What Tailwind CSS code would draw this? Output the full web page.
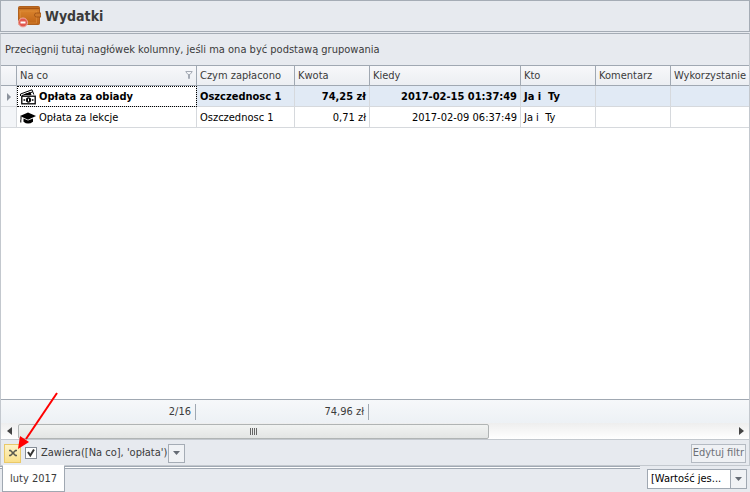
<!DOCTYPE html>
<html lang="pl">
<head>
    <meta charset="UTF-8">
    <meta name="viewport" content="width=device-width, initial-scale=1.0">
    <title>Wydatki</title>
    <script src="https://cdn.jsdelivr.net/npm/@tailwindcss/browser@4"></script>
</head>
<body class="h-screen flex flex-col overflow-hidden bg-[#e7eaef] text-[#3b3b3b] text-[11px] leading-4 font-['DejaVu_Sans_Condensed','DejaVu_Sans',sans-serif]">
    <!-- title -->
    <header class="h-8 shrink-0 flex items-center gap-1 pl-4 border border-[#a5acb5]">
        <svg class="w-6 h-6" viewBox="0 0 24 24">
            <defs>
                <linearGradient id="leather" x1="0" y1="0" x2="0" y2="1">
                    <stop offset="0" stop-color="#b5631c"/>
                    <stop offset=".25" stop-color="#d8812b"/>
                    <stop offset="1" stop-color="#bd6216"/>
                </linearGradient>
            </defs>
            <rect x="1.500" y="2.500" width="21" height="18" rx="1" fill="url(#leather)" stroke="#b0601f"/>
            <path d="M2 4.500h20" stroke="#a65212"/>
            <path d="M3.500 7h16v12h-16z" fill="none" stroke="#e09543" stroke-width=".5"/>
            <path d="M19.500 9h4.500v4h-4.500a2 2 0 0 1 0-4z" fill="#cf7a2a" stroke="#9a4f14" stroke-width=".8"/>
            <circle cx="6" cy="18.500" r="4.500" fill="#e2584f" stroke="#f0b0a8"/>
            <path d="M3.500 18.500h5" stroke="#fff" stroke-width="2"/>
        </svg>
        <h1 class="text-[14px] font-bold">Wydatki</h1>
    </header>

    <!-- grid -->
    <main class="flex-1 min-h-0 mt-px flex flex-col border border-[#c3c8ce] border-t-[#a5acb5]">
        <p class="h-8 shrink-0 flex items-center pl-1 pt-px border-b border-[#a0a8b2]">Przeciągnij tutaj nagłówek kolumny, jeśli ma ona być podstawą grupowania</p>

        <div class="flex-1 min-h-0 overflow-hidden bg-white">
            <table class="w-[790px] table-fixed border-separate border-spacing-0 text-black whitespace-nowrap">
                <colgroup>
                    <col class="w-4"><col class="w-[180px]"><col class="w-[98px]"><col class="w-[75px]"><col class="w-[151px]"><col class="w-[75px]"><col class="w-[75px]"><col class="w-[120px]">
                </colgroup>
                <thead>
                    <tr class="h-5 text-left text-[#3b3b3b] bg-linear-to-b from-[#f7f8fa] to-[#ebeef2] *:font-normal *:border-r *:border-b *:border-[#a0a8b2] *:px-[3px] *:py-0">
                        <th></th>
                        <th>
                            <div class="flex items-center justify-between">Na co
                                <svg class="w-2 h-4" viewBox="0 0 8 16" fill="none" stroke="#a5abb5"><path d="M.5 3.500h7M1 4l2 2.500h2L7 4M3.500 6v4.500h1V6"/></svg>
                            </div>
                        </th>
                        <th>Czym zapłacono</th>
                        <th>Kwota</th>
                        <th>Kiedy</th>
                        <th>Kto</th>
                        <th>Komentarz</th>
                        <th>Wykorzystanie b</th>
                    </tr>
                </thead>
                <tbody>
                    <tr class="h-[21px] font-bold bg-[#e1eaf5] *:border-r *:border-b *:border-[#d6d9dd] *:px-[3px] *:pt-0.5 *:pb-0">
                        <td class="bg-[#f3f5f8]"><svg class="w-2 h-2 ml-px" viewBox="0 0 8 8"><path d="M2 0l4 4-4 4z" fill="#8c939d"/></svg></td>
                        <td class="bg-white outline outline-dotted outline-black -outline-offset-1">
                            <div class="flex items-center gap-[3px]">
                                <svg class="w-4 h-4 shrink-0" viewBox="0 0 16 16" fill="none" stroke="#000">
                                    <path d="M.5 7V5L12 .8l1.800 4.700M2 6.500L12.500 3"/>
                                    <path d="M4.500 5.500L10 3.700l1 2z" fill="#000"/>
                                    <rect x="1.800" y="7.200" width="13.400" height="7.600" stroke-width="1.300"/>
                                    <circle cx="8.500" cy="11" r="2.300" fill="#000"/>
                                    <path d="M8.500 9.700v2.600" stroke="#fff"/>
                                    <path d="M3.500 11h1.500M12 11h1.500" stroke-width="1.500"/>
                                </svg>
                                Opłata za obiady
                            </div>
                        </td>
                        <td>Oszczednosc 1</td>
                        <td class="text-right">74,25 zł</td>
                        <td class="text-right">2017-02-15 01:37:49</td>
                        <td>Ja i&nbsp; Ty</td>
                        <td></td>
                        <td></td>
                    </tr>
                    <tr class="h-[21px] *:border-r *:border-b *:border-[#d6d9dd] *:px-[3px] *:pt-0.5 *:pb-0">
                        <td class="bg-[#f3f5f8]"></td>
                        <td>
                            <div class="flex items-center gap-[3px]">
                                <svg class="w-4 h-4 shrink-0" viewBox="0 0 16 16">
                                    <path d="M8 2.500l8 3.500-8 3.800L0 6z"/>
                                    <path d="M3.500 8.400L8 10.600l5-2.200v3.300Q8 15.500 3.500 11.700z"/>
                                    <path d="M1 6.500v3M.8 9.500v3" stroke="#000"/>
                                </svg>
                                Opłata za lekcje
                            </div>
                        </td>
                        <td>Oszczednosc 1</td>
                        <td class="text-right">0,71 zł</td>
                        <td class="text-right">2017-02-09 06:37:49</td>
                        <td>Ja i&nbsp; Ty</td>
                        <td></td>
                        <td></td>
                    </tr>
                </tbody>
            </table>
        </div>

        <!-- summary -->
        <div class="h-6 shrink-0 flex items-center border-t border-[#a0a8b2] bg-linear-to-b from-[#f6f8fa] to-[#edf1f5] text-right">
            <span class="w-[195px] pr-1 border-r border-[#a0a8b2]">2/16</span>
            <span class="w-[173px] pr-1 border-r border-[#a0a8b2]">74,96 zł</span>
        </div>

        <!-- horizontal scroll -->
        <div class="h-4 shrink-0 flex items-center bg-linear-to-b from-[#eeeeee] to-white">
            <button class="w-[17px] h-4 flex items-center justify-center" aria-label="Przewiń w lewo">
                <svg class="w-2 h-2" viewBox="0 0 8 8"><path d="M6 0v8L1 4z" fill="#444"/></svg>
            </button>
            <div class="flex-1 h-[15px]">
                <div class="w-[66%] h-full flex items-center justify-center gap-px rounded-xs border border-[#b0b4b4] bg-linear-to-b from-[#f1f3f2] to-[#e3e5e4] *:w-px *:h-[7px] *:bg-[#666]">
                    <i></i><i></i><i></i><i></i>
                </div>
            </div>
            <button class="w-[17px] h-4 flex items-center justify-center" aria-label="Przewiń w prawo">
                <svg class="w-2 h-2" viewBox="0 0 8 8"><path d="M2 0v8l5-4z" fill="#444"/></svg>
            </button>
        </div>

        <!-- filter -->
        <div class="relative h-[26px] shrink-0 flex items-center px-[3px] pt-px border-t border-[#c3c8ce]">
            <button class="w-[17px] h-[19px] flex items-center justify-center border border-[#eac968] bg-linear-to-b from-[#fdf3c8] to-[#fae08a]" aria-label="Wyczyść filtr">
                <svg class="w-2 h-2" viewBox="0 0 8 8" fill="none" stroke="#5a5a50" stroke-width="1.600"><path d="M0 1.500h1.500l2 2h1l2-2H8M0 6.500h1.500l2-2h1l2 2H8"/></svg>
            </button>
            <label class="ml-1 flex items-center gap-1">
                <input type="checkbox" checked class="peer appearance-none w-3 h-3 border border-[#858c96] bg-white">
                <svg class="w-3 h-3 -ml-4 hidden peer-checked:block pointer-events-none" viewBox="0 0 12 12" fill="none" stroke="#333" stroke-width="2"><path d="M3 5l2.300 3.500L9 2.500"/></svg>
                Zawiera([Na co], 'opłata')
            </label>
            <button class="ml-px w-[17px] h-[19px] flex items-center justify-center border border-[#a5acb5] bg-[#f0f2f5]" aria-label="Ostatnie filtry">
                <svg class="w-[7px] h-1" viewBox="0 0 7 4"><path d="M0 0h7L3.500 4z" fill="#666c75"/></svg>
            </button>
            <button class="ml-auto h-[19px] px-px border border-[#b4bac2] bg-[#eff1f4] text-[#6c7077]">Edytuj filtr</button>
            <svg class="absolute left-4 -top-12 w-11 h-15 pointer-events-none" viewBox="0 0 44 60">
                <path d="M40 1L9 47" stroke="#f00" stroke-width="2"/>
                <path d="M1 57l2-13 9 6z" fill="#f00"/>
            </svg>
        </div>
    </main>

    <!-- tabs -->
    <footer class="h-[26px] shrink-0 flex items-start justify-between pr-[3px]">
        <div class="flex-1 h-full">
            <div class="mr-[7px] h-[3px] border-y border-[#a0a8b2] bg-white"></div>
            <button class="relative -mt-1 ml-0.5 h-[27px] px-[7px] border border-[#a0a8b2] border-t-white bg-white">luty 2017</button>
        </div>
        <div class="relative mt-[3px] h-5 w-[100px] flex border border-[#a0a8b2] bg-white text-black">
            <select class="w-full appearance-none pl-[3px] outline-none" aria-label="Wartość">
                <option>[Wartość jes...</option>
            </select>
            <span class="absolute right-0 top-0 w-4 h-full flex items-center justify-center border-l border-[#a0a8b2] bg-[#f0f2f5] pointer-events-none">
                <svg class="w-[7px] h-1" viewBox="0 0 7 4"><path d="M0 0h7L3.500 4z" fill="#666c75"/></svg>
            </span>
        </div>
    </footer>
</body>
</html>
